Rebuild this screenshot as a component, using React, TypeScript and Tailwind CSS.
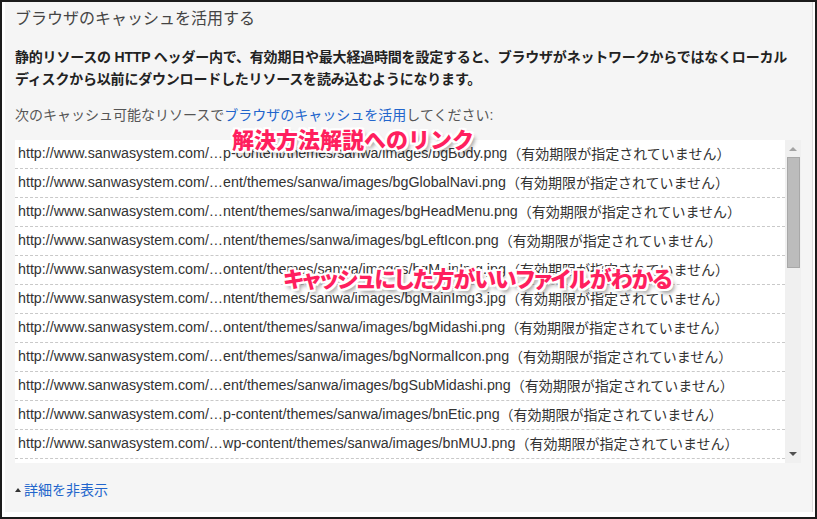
import React from 'react';

const files = [
  'p-content/themes/sanwa/images/bgBody.png',
  'ent/themes/sanwa/images/bgGlobalNavi.png',
  'ntent/themes/sanwa/images/bgHeadMenu.png',
  'ntent/themes/sanwa/images/bgLeftIcon.png',
  'ontent/themes/sanwa/images/bgMainImg.jpg',
  'ntent/themes/sanwa/images/bgMainImg3.jpg',
  'ontent/themes/sanwa/images/bgMidashi.png',
  'ent/themes/sanwa/images/bgNormalIcon.png',
  'ent/themes/sanwa/images/bgSubMidashi.png',
  'p-content/themes/sanwa/images/bnEtic.png',
  'wp-content/themes/sanwa/images/bnMUJ.png',
];

const outline =
  '[text-shadow:2px_0_0_#fff,-2px_0_0_#fff,0_2px_0_#fff,0_-2px_0_#fff,2px_2px_0_#fff,-2px_-2px_0_#fff,2px_-2px_0_#fff,-2px_2px_0_#fff,3px_4px_4px_rgba(0,0,0,0.45)]';

const App: React.FC = () => {
  return (
    <div className="w-[817px] h-[519px] bg-white border-2 border-[#1c1c1c] flex [font-family:'Liberation_Sans','Noto_Sans_CJK_JP',sans-serif]">
      <div className="relative flex-1 ml-[3px] mr-[2px] mb-[5px] bg-[#f5f5f5] border-r border-[#dcdcdc] pl-[10px] pr-[11px]">
        <h2 className="mt-[7px] text-[16px] leading-[20px] text-[#444] font-normal">
          ブラウザのキャッシュを活用する
        </h2>

        <p className="mt-[17px] text-[14px] leading-[22px] font-bold text-[#222] tracking-[-0.2px] whitespace-nowrap">
          静的リソースの HTTP ヘッダー内で、有効期日や最大経過時間を設定すると、ブラウザがネットワークからではなくローカル
          <br />
          ディスクから以前にダウンロードしたリソースを読み込むようになります。
        </p>

        <p className="mt-[15px] text-[14px] leading-[20px] text-[#555] whitespace-nowrap">
          次のキャッシュ可能なリソースで<span className="text-[#2265cc]">ブラウザのキャッシュを活用</span>してください:
        </p>

        <div className="mt-[15px] h-[323px] flex overflow-hidden">
          <div className="flex-1 bg-white">
            {files.map((f) => (
              <div
                key={f}
                className="h-[29px] flex items-center pl-[3px] border-b border-dashed border-[#c9c9c9] text-[#333] whitespace-nowrap"
              >
                <span className="text-[14.25px]">http://www.sanwasystem.com/…{f}</span>
                <span className="text-[14px]">（有効期限が指定されていません）</span>
              </div>
            ))}
          </div>
          <div className="w-[16px] bg-[#f0f0f0] flex flex-col items-center">
            <div className="h-[17px] flex items-center justify-center">
              <div className="w-0 h-0 border-l-[4px] border-r-[4px] border-b-[4px] border-l-transparent border-r-transparent border-b-[#a3a3a3]" />
            </div>
            <div className="w-[13px] h-[111px] bg-[#bcbcbc] border border-[#a8a8a8]" />
            <div className="flex-1" />
            <div className="h-[17px] flex items-center justify-center mb-[1px]">
              <div className="w-0 h-0 border-l-[4px] border-r-[4px] border-t-[4px] border-l-transparent border-r-transparent border-t-[#505050]" />
            </div>
          </div>
        </div>

        <div className="mt-[17px] flex items-center text-[14px] leading-[20px]">
          <span className="w-0 h-0 mr-[3px] border-l-[3px] border-r-[3px] border-b-[4px] border-l-transparent border-r-transparent border-b-[#333]" />
          <span className="text-[#2265cc]">詳細を非表示</span>
        </div>

        <div
          className={`absolute left-[227px] top-[122px] text-[22px] leading-[28px] font-black text-[#ff1f5e] whitespace-nowrap [font-family:'Noto_Sans_CJK_JP',sans-serif] ${outline}`}
        >
          解決方法解説へのリンク
        </div>
        <div
          className={`absolute left-[278px] top-[261px] text-[22px] leading-[28px] font-black text-[#ff1f5e] tracking-[-1.1px] whitespace-nowrap [font-family:'Noto_Sans_CJK_JP',sans-serif] [font-feature-settings:'palt'] ${outline}`}
        >
          キャッシュにした方がいいファイルがわかる
        </div>
      </div>
    </div>
  );
};

export default App;
